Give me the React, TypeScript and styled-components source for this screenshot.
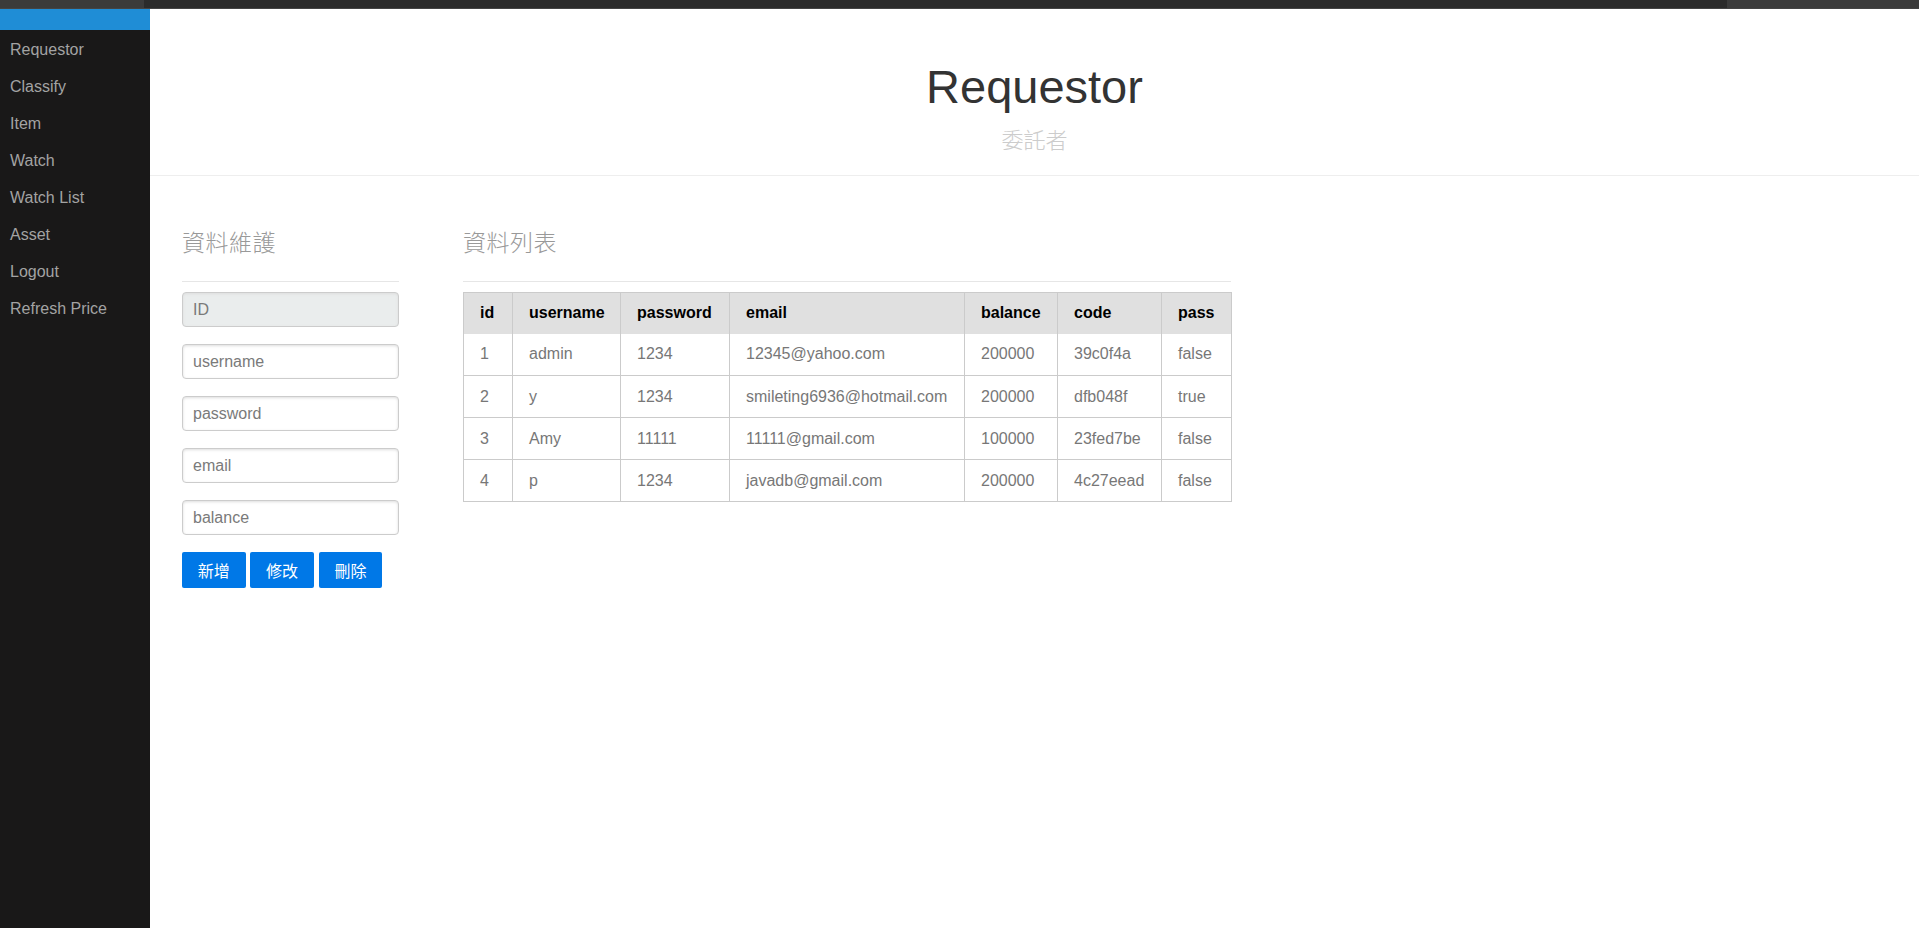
import React from "react";
import styled, { createGlobalStyle } from "styled-components";

const GlobalStyle = createGlobalStyle`
  html, body { margin: 0; padding: 0; background: #fff; }
  body {
    font-family: "Liberation Sans", Arial, "Noto Sans CJK TC", sans-serif;
    color: #777;
  }
  * { box-sizing: border-box; }
`;

const Page = styled.div`
  display: flex;
  flex-direction: column;
  min-height: 100vh;
`;

const TopStrip = styled.div`
  display: flex;
  height: 9px;
  flex: none;
`;

const StripPart = styled.div<{ $w?: number; $tone: string }>`
  height: 100%;
  background: ${(p) => p.$tone};
  ${(p) => (p.$w ? `width: ${p.$w}px; flex: none;` : "flex: 1;")}
  border-bottom: 1px solid #444;
`;

const Body = styled.div`
  display: flex;
  flex: 1;
`;

const Sidebar = styled.nav`
  width: 150px;
  flex: none;
  background: #191818;
  display: flex;
  flex-direction: column;
`;

const MenuHeading = styled.div`
  height: 21px;
  background: #1f8dd6;
`;

const MenuLink = styled.a`
  display: block;
  height: 37px;
  line-height: 40px;
  padding-left: 10px;
  font-size: 16px;
  color: #a3a3a3;
  text-decoration: none;
  white-space: nowrap;
`;

const Main = styled.main`
  flex: 1;
  display: flex;
  flex-direction: column;
`;

const Header = styled.header`
  text-align: center;
  padding-top: 54px;
  padding-bottom: 25px;
  border-bottom: 1px solid #eee;
`;

const Title = styled.h1`
  margin: 0;
  font-size: 47px;
  line-height: 47px;
  font-weight: normal;
  color: #333;
`;

const Subtitle = styled.h2`
  margin: 17px 0 0;
  font-family: "Noto Sans CJK TC", "Noto Sans CJK SC", sans-serif;
  font-size: 22px;
  line-height: 23px;
  font-weight: 300;
  color: #ccc;
`;

const Content = styled.div`
  display: flex;
  gap: 64px;
  padding: 50px 0 0 32px;
`;

const Column = styled.section<{ $w: number }>`
  width: ${(p) => p.$w}px;
  flex: none;
`;

const Subhead = styled.h3`
  margin: 0;
  font-family: "Noto Sans CJK TC", "Noto Sans CJK SC", sans-serif;
  font-size: 23px;
  line-height: 30px;
  font-weight: 300;
  color: #999;
  letter-spacing: 0.5px;
`;

const Rule = styled.hr`
  margin: 25px 0 10px;
  border: 0;
  border-top: 1px solid #e6e6e6;
  height: 0;
`;

const Form = styled.form`
  display: flex;
  flex-direction: column;
  gap: 17px;
`;

const Input = styled.input`
  width: 217px;
  height: 35px;
  padding: 0 10px;
  border: 1px solid #ccc;
  border-radius: 4px;
  box-shadow: inset 0 1px 3px #ddd;
  font-family: "Liberation Sans", Arial, sans-serif;
  font-size: 16px;
  color: #555;
  background: #fff;
  outline: none;
  &::placeholder { color: #7a7a7a; }
  &:disabled { background: #eaeded; color: #777; cursor: not-allowed; }
`;

const ButtonRow = styled.div`
  display: flex;
  gap: 4.6px;
`;

const Button = styled.button`
  height: 36px;
  width: 63.7px;
  padding: 0;
  border: 0;
  border-radius: 2px;
  background: #0078e7;
  color: #fff;
  font-family: "Noto Sans CJK TC", "Noto Sans CJK SC", sans-serif;
  font-size: 16px;
  cursor: pointer;
`;

const Table = styled.table`
  width: 768px;
  table-layout: fixed;
  border-collapse: collapse;
  border: 1px solid #cbcbcb;
  font-size: 16px;
`;

const Th = styled.th`
  height: 41px;
  padding: 0 16px;
  background: #e0e0e0;
  color: #000;
  font-weight: bold;
  text-align: left;
  border-left: 1px solid #cbcbcb;
  white-space: nowrap;
`;

const Td = styled.td`
  height: 42px;
  padding: 0 16px;
  color: #777;
  text-align: left;
  border-left: 1px solid #cbcbcb;
  border-bottom: 1px solid #cbcbcb;
  white-space: nowrap;
`;

const columns = [
  { key: "id", w: 49 },
  { key: "username", w: 108 },
  { key: "password", w: 109 },
  { key: "email", w: 235 },
  { key: "balance", w: 93 },
  { key: "code", w: 104 },
  { key: "pass", w: 70 },
];

const rows = [
  ["1", "admin", "1234", "12345@yahoo.com", "200000", "39c0f4a", "false"],
  ["2", "y", "1234", "smileting6936@hotmail.com", "200000", "dfb048f", "true"],
  ["3", "Amy", "11111", "11111@gmail.com", "100000", "23fed7be", "false"],
  ["4", "p", "1234", "javadb@gmail.com", "200000", "4c27eead", "false"],
];

const menu = ["Requestor", "Classify", "Item", "Watch", "Watch List", "Asset", "Logout", "Refresh Price"];

export default function App() {
  return (
    <>
      <GlobalStyle />
      <Page>
        <TopStrip>
          <StripPart $w={144} $tone="#3b3b3b" />
          <StripPart $tone="#2b2b2b" />
          <StripPart $w={192} $tone="#3b3b3b" />
        </TopStrip>
        <Body>
          <Sidebar>
            <MenuHeading />
            {menu.map((m) => (
              <MenuLink key={m} href="#">
                {m}
              </MenuLink>
            ))}
          </Sidebar>
          <Main>
            <Header>
              <Title>Requestor</Title>
              <Subtitle>委託者</Subtitle>
            </Header>
            <Content>
              <Column $w={217}>
                <Subhead>資料維護</Subhead>
                <Rule />
                <Form onSubmit={(e) => e.preventDefault()}>
                  <Input placeholder="ID" disabled />
                  <Input placeholder="username" />
                  <Input placeholder="password" />
                  <Input placeholder="email" />
                  <Input placeholder="balance" />
                  <ButtonRow>
                    <Button type="button">新增</Button>
                    <Button type="button">修改</Button>
                    <Button type="button">刪除</Button>
                  </ButtonRow>
                </Form>
              </Column>
              <Column $w={768}>
                <Subhead>資料列表</Subhead>
                <Rule />
                <Table>
                  <colgroup>
                    {columns.map((c) => (
                      <col key={c.key} style={{ width: c.w }} />
                    ))}
                  </colgroup>
                  <thead>
                    <tr>
                      {columns.map((c) => (
                        <Th key={c.key}>{c.key}</Th>
                      ))}
                    </tr>
                  </thead>
                  <tbody>
                    {rows.map((r) => (
                      <tr key={r[0]}>
                        {r.map((v, i) => (
                          <Td key={i}>{v}</Td>
                        ))}
                      </tr>
                    ))}
                  </tbody>
                </Table>
              </Column>
            </Content>
          </Main>
        </Body>
      </Page>
    </>
  );
}
